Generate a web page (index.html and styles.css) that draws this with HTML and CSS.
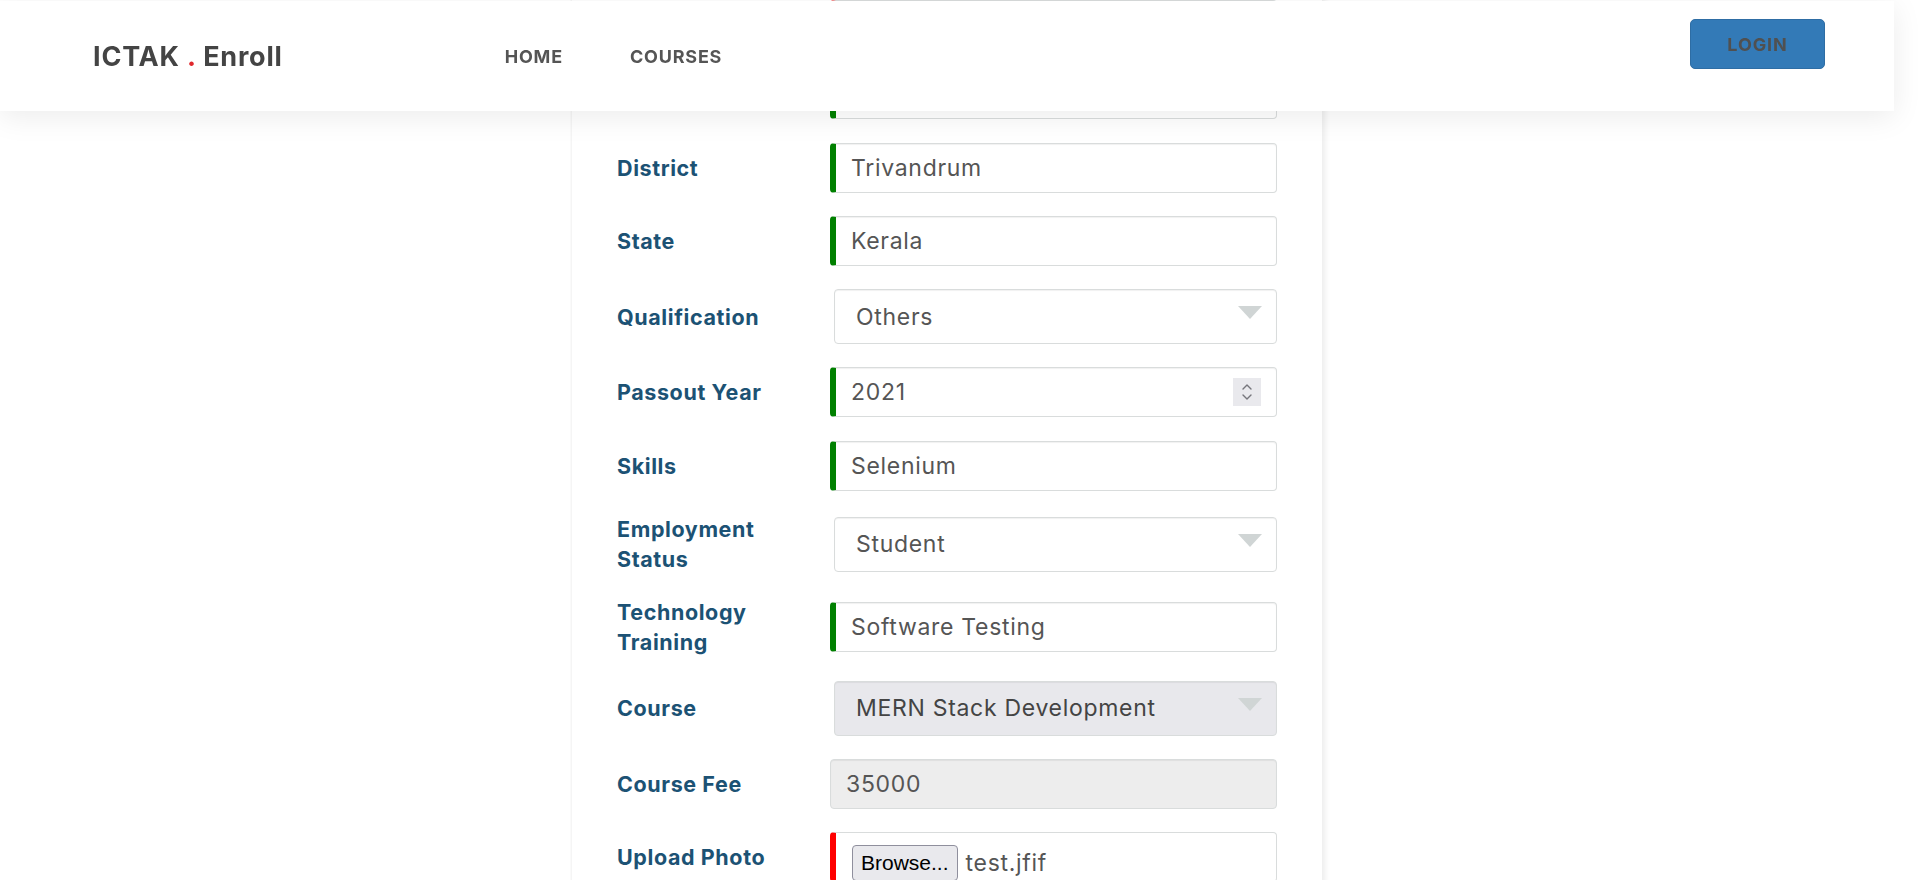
FILE: index.html
```html
<!DOCTYPE html>
<html lang="en">
<head>
<meta charset="utf-8">
<title>ICTAK Enroll</title>
<link rel="stylesheet" href="styles.css">
</head>
<body>
<header class="navbar">
  <a class="brand" href="#">ICTAK <span class="dot">.</span> Enroll</a>
  <nav class="nav-links">
    <a href="#">HOME</a>
    <a href="#">COURSES</a>
  </nav>
  <button class="login" type="button">LOGIN</button>
</header>

<main class="page">
  <section class="card">
    <form class="form">
      <div class="row row-hidden">
        <span class="label"></span>
        <input class="field field-bad" type="text" value="">
      </div>
      <div class="row">
        <span class="label"></span>
        <input class="field field-ok" type="text" value="">
      </div>
      <div class="row">
        <label class="label">District</label>
        <input class="field field-ok" type="text" value="Trivandrum">
      </div>
      <div class="row">
        <label class="label">State</label>
        <input class="field field-ok" type="text" value="Kerala">
      </div>
      <div class="row">
        <label class="label">Qualification</label>
        <div class="select-wrap">
          <select class="select"><option>Others</option></select>
          <span class="caret"></span>
        </div>
      </div>
      <div class="row">
        <label class="label">Passout Year</label>
        <div class="number-wrap">
          <input class="field field-ok" type="text" value="2021">
          <span class="spinner">
            <svg width="12" height="24" viewBox="0 0 12 24" fill="none" stroke="#76767c" stroke-width="1.4" stroke-linecap="round" stroke-linejoin="round"><path d="M2 9 L6 5 L10 9"/><path d="M2 15 L6 19 L10 15"/></svg>
          </span>
        </div>
      </div>
      <div class="row">
        <label class="label">Skills</label>
        <input class="field field-ok" type="text" value="Selenium">
      </div>
      <div class="row">
        <label class="label">Employment<br>Status</label>
        <div class="select-wrap">
          <select class="select"><option>Student</option></select>
          <span class="caret"></span>
        </div>
      </div>
      <div class="row">
        <label class="label">Technology<br>Training</label>
        <input class="field field-ok" type="text" value="Software Testing">
      </div>
      <div class="row">
        <label class="label">Course</label>
        <div class="select-wrap">
          <select class="select select-disabled" disabled><option>MERN Stack Development</option></select>
          <span class="caret"></span>
        </div>
      </div>
      <div class="row">
        <label class="label">Course Fee</label>
        <input class="field field-disabled" type="text" value="35000" disabled>
      </div>
      <div class="row">
        <label class="label">Upload Photo</label>
        <div class="file">
          <span class="browse">Browse...</span>
          <span class="file-name">test.jfif</span>
        </div>
      </div>
    </form>
  </section>
</main>
</body>
</html>
```

FILE: styles.css
```css
* { box-sizing: border-box; }

html, body {
  margin: 0;
  padding: 0;
  overflow: hidden;
  background: #ffffff;
  font-family: "Inter", "Open Sans", sans-serif;
}

/* ---------- navbar ---------- */
.navbar {
  position: fixed;
  top: 1px;
  left: 0;
  z-index: 10;
  width: calc(100% - 26px);
  height: 110px;
  background: #ffffff;
  display: flex;
  align-items: center;
  padding-left: 93px;
  padding-right: 69px;
  box-shadow: 0 6px 28px rgba(0, 0, 0, 0.08);
}

.brand {
  font-size: 27px;
  font-weight: 700;
  letter-spacing: 0.8px;
  color: #444444;
  text-decoration: none;
  white-space: nowrap;
}

.brand .dot { color: #e0282d; }

.nav-links {
  display: flex;
  gap: 67px;
  margin-left: 222px;
}

.nav-links a {
  font-size: 18px;
  font-weight: 700;
  letter-spacing: 0.8px;
  color: #555555;
  text-decoration: none;
}

.login {
  margin-left: auto;
  align-self: flex-start;
  margin-top: 18px;
  width: 135px;
  height: 50px;
  border: 1px solid #2e6da4;
  border-radius: 5px;
  background: #337ab7;
  color: #505050;
  font-family: inherit;
  font-size: 18px;
  font-weight: 700;
  letter-spacing: 0.9px;
}

/* ---------- page / card ---------- */
.page {
  width: calc(100% - 26px);
  margin-top: -49px;
}

.card {
  width: 750px;
  margin: 0 auto;
  padding: 0 45px 40px;
  background: #ffffff;
  box-shadow: 3px 0 6px rgba(0, 0, 0, 0.08), -1px 0 2px rgba(0, 0, 0, 0.05);
}

.form {
  display: flex;
  flex-direction: column;
  gap: 23.3px;
}

.row {
  display: grid;
  grid-template-columns: 213px 1fr;
  align-items: center;
}

.row-hidden { margin-bottom: 45px; }

.label {
  font-size: 21.5px;
  font-weight: 700;
  letter-spacing: 0.6px;
  color: #1c5274;
  line-height: 30px;
}

/* ---------- inputs ---------- */
.field {
  display: block;
  width: 100%;
  height: 50px;
  border: 1px solid #d9dcdc;
  border-radius: 4px;
  background: #ffffff;
  box-shadow: inset 0 1px 1px rgba(0, 0, 0, 0.06);
  padding: 0 15px;
  font-family: inherit;
  font-size: 23px;
  letter-spacing: 0.7px;
  color: #555555;
  outline: none;
}

.field-ok { border-left: 6px solid #008000; }
.field-bad { border-left: 6px solid #ff0000; }

.field-disabled {
  background: #ededed;
  color: #555555;
}

.select-wrap {
  position: relative;
  margin-left: 4px;
}

.select {
  display: block;
  width: 100%;
  height: 55px;
  appearance: none;
  -webkit-appearance: none;
  border: 1px solid #d9dcdc;
  border-radius: 4px;
  background: #ffffff;
  box-shadow: inset 0 1px 1px rgba(0, 0, 0, 0.06);
  padding: 0 21px;
  font-family: inherit;
  font-size: 23px;
  letter-spacing: 0.7px;
  color: #555555;
  outline: none;
}

.select-disabled {
  background: #e8e8ec;
  color: #444444;
  opacity: 1;
}

.caret {
  position: absolute;
  top: 17px;
  right: 15px;
  width: 0;
  height: 0;
  border-left: 12px solid transparent;
  border-right: 12px solid transparent;
  border-top: 13px solid #d0d5d5;
  pointer-events: none;
}

.number-wrap { position: relative; }

.spinner {
  position: absolute;
  top: 11px;
  right: 16px;
  width: 28px;
  height: 28px;
  background: #e9e9ed;
  display: flex;
  align-items: center;
  justify-content: center;
}

.file {
  display: flex;
  align-items: flex-start;
  gap: 8px;
  height: 50px;
  padding: 12px 16px 0;
  border: 1px solid #d9dcdc;
  border-left: 6px solid #ff0000;
  border-radius: 4px;
  background: #ffffff;
}

.browse {
  display: inline-block;
  flex: none;
  height: 36px;
  line-height: 34px;
  padding: 0 8px;
  border: 1px solid #8f8f9d;
  border-radius: 4px;
  background: #e9e9ed;
  color: #000000;
  font-family: "Liberation Sans", Arial, sans-serif;
  font-size: 21px;
}

.file-name {
  line-height: 36px;
  font-size: 23px;
  letter-spacing: 0.7px;
  color: #555555;
}
```
